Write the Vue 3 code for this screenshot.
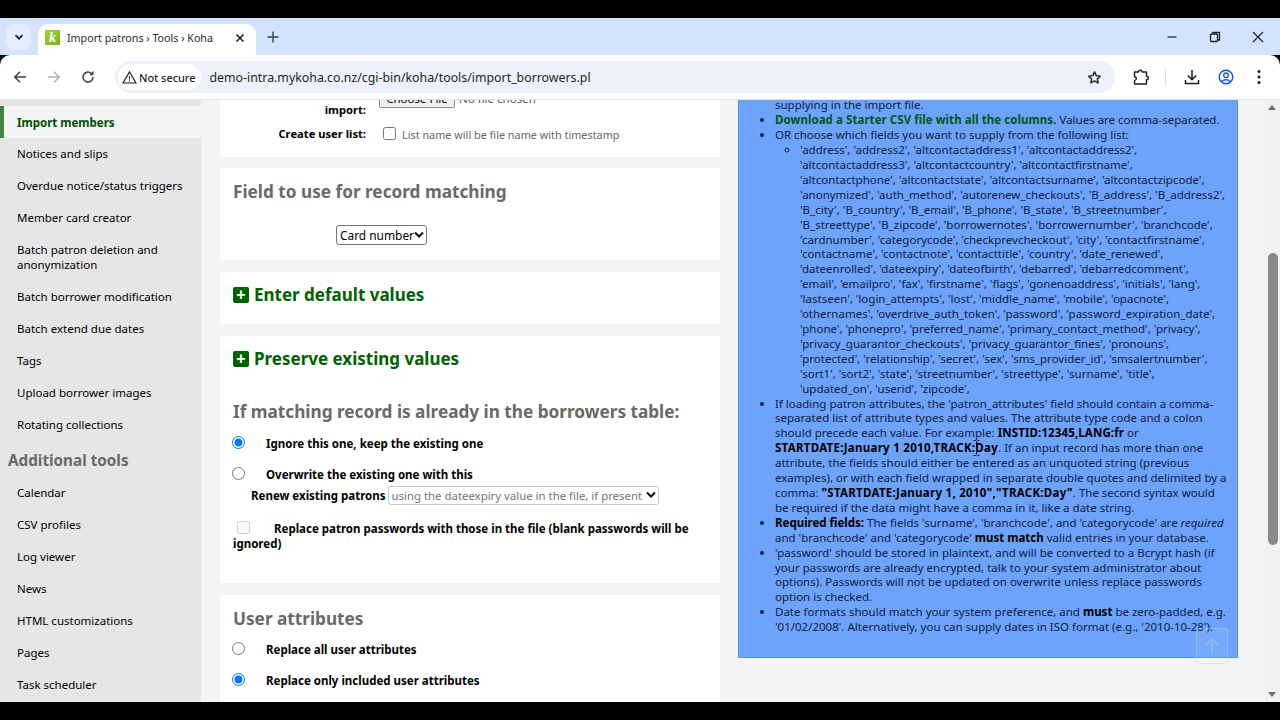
<script setup>
const toolLinks = [
  { label: 'Import members', active: true },
  { label: 'Notices and slips' },
  { label: 'Overdue notice/status triggers' },
  { label: 'Member card creator' },
  { label: 'Batch patron deletion and anonymization', tall: true },
  { label: 'Batch borrower modification' },
  { label: 'Batch extend due dates' },
  { label: 'Tags' },
  { label: 'Upload borrower images' },
  { label: 'Rotating collections' },
]
const extraLinks = ['Calendar', 'CSV profiles', 'Log viewer', 'News', 'HTML customizations', 'Pages', 'Task scheduler']
const fieldLines = [
  "'address', 'address2', 'altcontactaddress1', 'altcontactaddress2',",
  "'altcontactaddress3', 'altcontactcountry', 'altcontactfirstname',",
  "'altcontactphone', 'altcontactstate', 'altcontactsurname', 'altcontactzipcode',",
  "'anonymized', 'auth_method', 'autorenew_checkouts', 'B_address', 'B_address2',",
  "'B_city', 'B_country', 'B_email', 'B_phone', 'B_state', 'B_streetnumber',",
  "'B_streettype', 'B_zipcode', 'borrowernotes', 'borrowernumber', 'branchcode',",
  "'cardnumber', 'categorycode', 'checkprevcheckout', 'city', 'contactfirstname',",
  "'contactname', 'contactnote', 'contacttitle', 'country', 'date_renewed',",
  "'dateenrolled', 'dateexpiry', 'dateofbirth', 'debarred', 'debarredcomment',",
  "'email', 'emailpro', 'fax', 'firstname', 'flags', 'gonenoaddress', 'initials', 'lang',",
  "'lastseen', 'login_attempts', 'lost', 'middle_name', 'mobile', 'opacnote',",
  "'othernames', 'overdrive_auth_token', 'password', 'password_expiration_date',",
  "'phone', 'phonepro', 'preferred_name', 'primary_contact_method', 'privacy',",
  "'privacy_guarantor_checkouts', 'privacy_guarantor_fines', 'pronouns',",
  "'protected', 'relationship', 'secret', 'sex', 'sms_provider_id', 'smsalertnumber',",
  "'sort1', 'sort2', 'state', 'streetnumber', 'streettype', 'surname', 'title',",
  "'updated_on', 'userid', 'zipcode',",
]
</script>

<template>
  <div class="screen">
    <div class="tabstrip">
      <div class="tab-search">
        <svg width="12" height="12" viewBox="0 0 12 12"><path d="M2.5 4.2 6 7.7l3.5-3.5" fill="none" stroke="#1f1f1f" stroke-width="1.8"/></svg>
      </div>
      <div class="tab">
        <span class="favicon">k</span>
        <span class="tab-title">Import patrons › Tools › Koha</span>
        <svg width="12" height="12" viewBox="0 0 12 12"><path d="M2.5 2.5l7 7M9.5 2.5l-7 7" stroke="#1f1f1f" stroke-width="1.6"/></svg>
      </div>
      <svg class="new-tab" width="14" height="14" viewBox="0 0 14 14"><path d="M7 1.5v11M1.5 7h11" stroke="#3c4043" stroke-width="1.4"/></svg>
      <div class="window-btns">
        <svg width="12" height="12" viewBox="0 0 12 12"><path d="M1.5 6h9" stroke="#1f1f1f" stroke-width="1.2"/></svg>
        <svg width="12" height="12" viewBox="0 0 12 12"><rect x="1.5" y="3" width="7" height="7.5" rx="1" fill="none" stroke="#1f1f1f" stroke-width="1.3"/><path d="M3.8 3V1.5h6.700v7.500H8.500" fill="none" stroke="#1f1f1f" stroke-width="1.3"/></svg>
        <svg width="12" height="12" viewBox="0 0 12 12"><path d="M1 1l10 10M11 1L1 11" stroke="#1f1f1f" stroke-width="1.1"/></svg>
      </div>
    </div>

    <div class="toolbar">
      <svg class="nav" width="16" height="16" viewBox="0 0 16 16"><path d="M14 8H3M8 2.800 2.800 8 8 13.200" fill="none" stroke="#444746" stroke-width="1.6"/></svg>
      <svg class="nav" width="16" height="16" viewBox="0 0 16 16"><path d="M2 8h11M8 2.800 13.200 8 8 13.200" fill="none" stroke="#b1b3b5" stroke-width="1.6"/></svg>
      <svg class="nav" width="16" height="16" viewBox="0 0 16 16"><path d="M13 8a5 5 0 1 1-1.500-3.500" fill="none" stroke="#444746" stroke-width="1.600"/><path d="M13.500 1.800v4.400H9.100z" fill="#444746"/></svg>
      <div class="omnibox">
        <div class="chip">
          <svg width="15" height="15" viewBox="0 0 15 15"><path d="M7.500 2 14 13H1z" fill="none" stroke="#1f1f1f" stroke-width="1.200"/><path d="M7.500 6v3.600M7.500 10.400v1.200" stroke="#1f1f1f" stroke-width="1.100"/></svg>
          <span>Not secure</span>
        </div>
        <span class="url">demo-intra.mykoha.co.nz/cgi-bin/koha/tools/import_borrowers.pl</span>
        <svg class="star" width="15" height="15" viewBox="0 0 24 24"><path d="m12 3 2.800 6 6.500.8-4.800 4.500 1.300 6.500L12 17.500 6.200 20.800l1.300-6.500L2.700 9.800 9.200 9z" fill="none" stroke="#1f1f1f" stroke-width="2.300" stroke-linejoin="round"/></svg>
      </div>
      <div class="tools">
        <svg width="16" height="17" viewBox="0 0 16 17"><path d="M1.500 3.500h4a1.800 1.800 0 0 1 3.600 0h4.400v4.200a1.800 1.800 0 0 1 0 3.600v4.200H1.500v-3.600a1.800 1.800 0 0 0 0-3.600z" transform="translate(0 -.5)" fill="none" stroke="#1f1f1f" stroke-width="1.400" stroke-linejoin="round"/></svg>
        <i class="tool-sep"></i>
        <svg width="16" height="16" viewBox="0 0 16 16"><path d="M8 1v9.500M3.800 6.500 8 10.700l4.200-4.200M1.500 11v3.500h13V11" fill="none" stroke="#1f1f1f" stroke-width="1.500"/></svg>
        <svg width="16" height="16" viewBox="0 0 16 16"><circle cx="8" cy="8" r="6.800" fill="none" stroke="#0b57d0" stroke-width="1.400"/><circle cx="8" cy="6.300" r="2.300" fill="none" stroke="#0b57d0" stroke-width="1.300"/><path d="M3.800 12.300c2-2.100 6.400-2.100 8.400 0" fill="none" stroke="#0b57d0" stroke-width="1.300"/></svg>
        <svg class="tool-menu" width="4" height="16" viewBox="0 0 4 16"><circle cx="2" cy="2.500" r="1.500" fill="#1f1f1f"/><circle cx="2" cy="8" r="1.500" fill="#1f1f1f"/><circle cx="2" cy="13.500" r="1.500" fill="#1f1f1f"/></svg>
      </div>
    </div>

    <div class="page">
      <aside class="sidebar">
        <ul>
          <li v-for="link in toolLinks" :key="link.label" :class="{ active: link.active, tall: link.tall }">{{ link.label }}</li>
        </ul>
        <h5>Additional tools</h5>
        <ul>
          <li v-for="link in extraLinks" :key="link">{{ link }}</li>
        </ul>
      </aside>

      <main class="main">
        <section class="card card-file">
          <div class="form-row">
            <label>Select the file to import:</label>
            <div class="file-field"><button type="button">Choose File</button><span>No file chosen</span></div>
          </div>
          <div class="form-row list-row">
            <label>Create user list:</label>
            <div class="list-field"><input type="checkbox" /><span>List name will be file name with timestamp</span></div>
          </div>
        </section>

        <section class="card card-match">
          <h2>Field to use for record matching</h2>
          <div class="match-select"><select class="sel"><option>Card number</option></select></div>
        </section>

        <section class="card card-toggle">
          <h2 class="green"><i class="plus">+</i>Enter default values</h2>
        </section>

        <section class="card card-preserve">
          <h2 class="green"><i class="plus">+</i>Preserve existing values</h2>
          <h2 class="matching">If matching record is already in the borrowers table:</h2>
          <div class="radio-row"><input type="radio" name="dup" checked /><span>Ignore this one, keep the existing one</span></div>
          <div class="radio-row"><input type="radio" name="dup" /><span>Overwrite the existing one with this</span></div>
          <div class="renew-row">
            <b>Renew existing patrons</b>
            <select class="sel sel-off" disabled><option>using the dateexpiry value in the file, if present</option></select>
          </div>
          <p class="replace"><input type="checkbox" disabled /><b>Replace patron passwords with those in the file (blank passwords will be ignored)</b></p>
        </section>

        <section class="card card-attrs">
          <h2>User attributes</h2>
          <div class="radio-row"><input type="radio" name="attr" /><span>Replace all user attributes</span></div>
          <div class="radio-row"><input type="radio" name="attr" checked /><span>Replace only included user attributes</span></div>
        </section>
      </main>

      <div class="help-col">
        <div class="help">
          <ul>
            <li class="clipped">supplying in the import file.</li>
            <li><a>Download a Starter CSV file with all the columns.</a> Values are comma-separated.</li>
            <li>OR choose which fields you want to supply from the following list:
              <ul>
                <li><template v-for="line in fieldLines" :key="line">{{ line }}<br /></template></li>
              </ul>
            </li>
            <li>If loading patron attributes, the 'patron_attributes' field should contain a comma-<br />separated list of attribute types and values. The attribute type code and a colon<br />should precede each value. For example: <b class="code-sm">INSTID:12345,LANG:fr</b> or<br /><b class="code">STARTDATE:January 1 2010,TRACK:Day</b>. If an input record has more than one<br />attribute, the fields should either be entered as an unquoted string (previous<br />examples), or with each field wrapped in separate double quotes and delimited by a<br />comma: <b class="code">"STARTDATE:January 1, 2010","TRACK:Day"</b>. The second syntax would<br />be required if the data might have a comma in it, like a date string.</li>
            <li><b>Required fields:</b> The fields 'surname', 'branchcode', and 'categorycode' are <em>required</em><br />and 'branchcode' and 'categorycode' <b>must match</b> valid entries in your database.</li>
            <li>'password' should be stored in plaintext, and will be converted to a Bcrypt hash (if<br />your passwords are already encrypted, talk to your system administrator about<br />options). Passwords will not be updated on overwrite unless replace passwords<br />option is checked.</li>
            <li>Date formats should match your system preference, and <b>must</b> be zero-padded, e.g.<br />'01/02/2008'. Alternatively, you can supply dates in ISO format (e.g., '2010-10-28').</li>
          </ul>
        </div>
      </div>

      <div class="scrollbar">
        <i class="arrow up"></i>
        <i class="thumb"></i>
        <i class="arrow down"></i>
      </div>

      <div class="to-top">
        <svg width="16" height="18" viewBox="0 0 16 18"><path d="M8 17V2M2 8l6-6 6 6" fill="none" stroke="#8fb6f5" stroke-width="2"/></svg>
      </div>
      <svg class="ibeam" width="7" height="16" viewBox="0 0 7 16"><path d="M.5.500h2l1 1 1-1h2M3.500 1.500v13M.5 15.500h2l1-1 1 1h2" fill="none" stroke="#111" stroke-width="1"/></svg>
    </div>
  </div>
</template>

<style>
html, body { margin: 0; background: #000; }
</style>

<style scoped>
.screen {
  width: 1280px;
  height: 720px;
  box-sizing: border-box;
  padding: 18px 0;
  background: #000;
  display: flex;
  flex-direction: column;
  overflow: hidden;
  font-family: "Noto Sans", "Open Sans", sans-serif;
  font-size: 11.5px;
  color: #000;
}

/* browser chrome */
.tabstrip {
  height: 37px;
  flex: none;
  display: flex;
  align-items: flex-end;
  background: #d3e3fd;
}
.tab-search {
  width: 25px;
  height: 26px;
  margin: 0 7px 5px 6px;
  border-radius: 8px;
  background: #e3edfd;
  display: flex;
  align-items: center;
  justify-content: center;
}
.tab {
  width: 218px;
  height: 31px;
  box-sizing: border-box;
  padding: 0 10px 4px 7px;
  background: #fff;
  border-radius: 10px 10px 0 0;
  display: flex;
  align-items: center;
  gap: 7px;
}
.favicon {
  width: 15px;
  height: 15px;
  background: linear-gradient(135deg, #a8d52c, #6fb51c);
  color: #fff;
  font: italic 700 14px/15px "Liberation Serif", serif;
  text-align: center;
}
.tab-title {
  flex: 1;
  font-size: 10.700px;
  color: #2b2b2b;
  white-space: nowrap;
}
.new-tab { margin: 0 0 11px 10px; }
.window-btns {
  margin-left: auto;
  margin-bottom: 12px;
  padding-right: 16px;
  display: flex;
  gap: 31px;
}
.toolbar {
  height: 45px;
  flex: none;
  box-sizing: border-box;
  padding-left: 12px;
  display: flex;
  align-items: center;
  gap: 18px;
  background: #fff;
  border-bottom: 1px solid #e3e3e3;
  border-radius: 10px 10px 0 0;
}
.omnibox {
  width: 1000px;
  height: 32px;
  margin-left: 1px;
  box-sizing: border-box;
  padding: 0 13px 0 3px;
  border-radius: 16px;
  background: #edf2fa;
  display: flex;
  align-items: center;
}
.chip {
  height: 26px;
  padding: 0 6px 0 4px;
  border-radius: 13px;
  background: #fff;
  display: flex;
  align-items: center;
  gap: 2px;
  font-size: 10.900px;
  font-weight: 500;
  color: #1f1f1f;
  white-space: nowrap;
}
.url {
  margin-left: 8px;
  font-size: 12.350px;
  color: #1f1f1f;
  white-space: nowrap;
}
.star { margin-left: auto; }
.tools {
  display: flex;
  align-items: center;
  gap: 18px;
}
.tool-sep {
  width: 1px;
  height: 16px;
  margin: 0 0 0 -2px;
  background: #d8dde5;
}
.tool-menu { margin-left: 5px; }

/* page */
.page {
  position: relative;
  flex: 1;
  min-height: 0;
  display: flex;
  overflow: hidden;
  background: #f3f4f4;
}
.sidebar {
  width: 201px;
  flex: none;
  background: #e6e6e6;
  padding-top: 5.500px;
  box-sizing: border-box;
}
.sidebar ul { margin: 0; padding: 0; list-style: none; }
.sidebar li {
  height: 32px;
  box-sizing: border-box;
  padding: 0 10px 0 17px;
  display: flex;
  align-items: center;
  line-height: 15px;
}
.sidebar li.tall { height: 47px; padding-right: 30px; }
.sidebar li.active {
  background: #f3f4f4;
  border-left: 4px solid #408540;
  padding: 1px 10px 0 13px;
  color: #004d00;
  font-weight: 700;
}
.sidebar h5 {
  margin: 0;
  padding: 0 0 0 8px;
  height: 36px;
  line-height: 38px;
  font-size: 15.250px;
  font-weight: 700;
  color: #696969;
}
.main {
  width: 500px;
  flex: none;
  margin-left: 19px;
  display: flex;
  flex-direction: column;
  gap: 12px;
}
.card {
  flex: none;
  background: #fff;
  box-sizing: border-box;
  padding: 0 13px;
}
.card h2 {
  margin: 0;
  font-size: 17.200px;
  line-height: 24px;
  font-weight: 700;
  color: #696969;
}
.card h2.green { color: #006100; font-size: 17px; display: flex; align-items: center; }
.plus {
  width: 16px;
  height: 16px;
  margin-right: 5px;
  border-radius: 2px;
  background: #006100;
  color: #fff;
  font: 700 16px/15px "Liberation Sans", sans-serif;
  text-align: center;
}
.card-file {
  height: 57px;
  margin-bottom: -1px;
  display: flex;
  flex-direction: column;
  justify-content: flex-end;
  padding-bottom: 16px;
  overflow: hidden;
}
.form-row {
  display: flex;
  flex: none;
  align-items: flex-end;
}
.form-row label {
  width: 133px;
  flex: none;
  text-align: right;
  font-size: 11.200px;
  font-weight: 700;
  line-height: 15px;
}
.file-field {
  margin-left: 13px;
  margin-bottom: 9px;
  display: flex;
  align-items: center;
  gap: 4px;
  color: #555;
}
.file-field button {
  width: 76px;
  height: 19px;
  padding: 0;
  font: 11.500px "Noto Sans", sans-serif;
  border: 1px solid #8f8f8f;
  border-radius: 2px;
  background: #efefef;
}
.list-row { margin-top: 9px; }
.list-field {
  margin-left: 17px;
  display: flex;
  align-items: center;
  gap: 6px;
  font-size: 10.850px;
  color: #666;
}
.list-field input { margin: 0; width: 13px; height: 13px; }
.list-field span { position: relative; top: 1px; }
.card-match { height: 92px; padding-top: 12px; }
.match-select { margin: 21px 0 0 103px; }
.sel {
  appearance: none;
  box-sizing: border-box;
  display: block;
  border: 1px solid #767676;
  border-radius: 3px;
  background: #fff url("data:image/svg+xml,%3Csvg xmlns='http://www.w3.org/2000/svg' width='10' height='8'%3E%3Cpath d='M1 1.500l4 4 4-4' fill='none' stroke='%23111' stroke-width='2'/%3E%3C/svg%3E") no-repeat right 2px center;
  color: #000;
}
.match-select .sel {
  width: 91px;
  height: 20px;
  padding: 0 0 0 3px;
  font: 11.900px "Noto Sans", sans-serif;
}
.card-toggle { height: 52px; padding-top: 11px; }
.card-preserve { height: 247px; padding-top: 11px; }
.card-preserve .matching { margin-top: 29px; margin-bottom: 4px; }
.radio-row {
  display: flex;
  align-items: center;
  height: 31px;
  font-weight: 700;
}
.radio-row input { margin: -3px 21px 0 -1px; width: 13px; height: 13px; flex: none; }
.renew-row {
  margin: -7px 0 0 18px;
  height: 24px;
  display: flex;
  align-items: center;
  gap: 2px;
}
.renew-row .sel {
  width: 271px;
  height: 19px;
  padding: 0 0 0 3px;
  font: 11.400px "Noto Sans", sans-serif;
}
.sel-off {
  border-color: #c9c9c9;
  opacity: 1;
  color: #70757a;
}
.replace {
  margin: 14px 0 0;
  line-height: 15px;
}
.replace input { margin: 0 24px 0 4px; width: 13px; height: 13px; vertical-align: -1px; }
.card-attrs { height: 120px; padding-top: 12px; }
.card-attrs .radio-row:first-of-type { margin-top: 3px; }
.help-col { width: 500px; flex: none; margin-left: 18px; }
.help {
  height: 558px;
  box-sizing: border-box;
  background: #6da3fb;
  border: 1px solid #5a8fe6;
  border-top: 0;
  color: #0c2040;
  font-size: 11.500px;
  line-height: 14.900px;
  overflow: hidden;
  white-space: nowrap;
}
.help ul { margin: 0; padding-left: 36px; }
.help ul ul { padding-left: 25px; list-style: circle; }
.help b { color: #000; }
.help .code { letter-spacing: .28px; }
.help .code-sm { letter-spacing: .12px; }
.help a { color: #005a10; font-weight: 700; letter-spacing: .06px; }
.clipped { list-style: none; margin-top: -1.600px; }
.scrollbar {
  position: absolute;
  top: 0;
  right: 0;
  bottom: 0;
  width: 15px;
  background: #f1f1f1;
}
.thumb {
  position: absolute;
  top: 153px;
  left: 3px;
  width: 10px;
  height: 292px;
  border-radius: 5px;
  background: #8a8a8a;
}
.arrow {
  position: absolute;
  left: 3px;
  width: 0;
  height: 0;
  border-left: 4px solid transparent;
  border-right: 4px solid transparent;
}
.arrow.up { top: 5px; border-bottom: 5px solid #6e6e6e; }
.arrow.down { bottom: 5px; border-top: 5px solid #6e6e6e; }
.to-top {
  position: absolute;
  left: 1196px;
  top: 528px;
  width: 32px;
  height: 36px;
  box-sizing: border-box;
  background: rgba(255, 255, 255, .07);
  border: 1px solid rgba(200, 220, 250, .35);
  border-radius: 3px;
  display: flex;
  align-items: center;
  justify-content: center;
}
.ibeam {
  position: absolute;
  left: 973px;
  top: 340px;
}
</style>
